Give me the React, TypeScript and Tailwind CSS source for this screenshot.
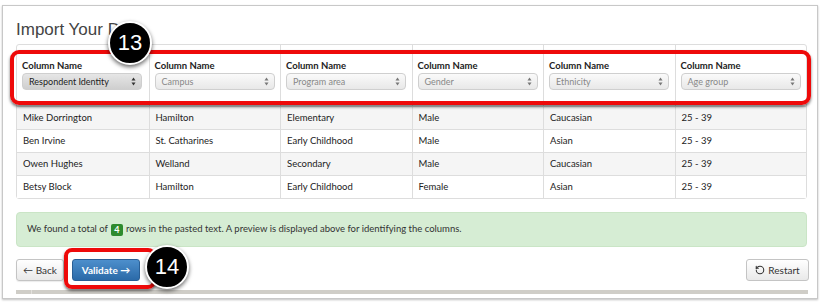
import { RotateCcw } from "lucide-react";

const columns = [
  { label: "Respondent Identity", active: true },
  { label: "Campus", active: false },
  { label: "Program area", active: false },
  { label: "Gender", active: false },
  { label: "Ethnicity", active: false },
  { label: "Age group", active: false },
];

const rows = [
  ["Mike Dorrington", "Hamilton", "Elementary", "Male", "Caucasian", "25 - 39"],
  ["Ben Irvine", "St. Catharines", "Early Childhood", "Male", "Asian", "25 - 39"],
  ["Owen Hughes", "Welland", "Secondary", "Male", "Caucasian", "25 - 39"],
  ["Betsy Block", "Hamilton", "Early Childhood", "Female", "Asian", "25 - 39"],
];

function Arrows({ dark }: { dark: boolean }) {
  return (
    <svg width="5" height="9" viewBox="0 0 5 9" className="shrink-0">
      <path d="M2.5 0.5 L4.5 3.5 L0.5 3.5 Z" fill={dark ? "#333" : "#777"} />
      <path d="M2.5 8.5 L4.5 5.5 L0.5 5.5 Z" fill={dark ? "#333" : "#777"} />
    </svg>
  );
}

function Callout({ n }: { n: string }) {
  return (
    <div className="w-[44px] h-[44px] rounded-full bg-black border-[2px] border-white shadow-[0_2px_4px_rgba(0,0,0,0.6)] flex items-center justify-center text-white text-[22px] font-['Liberation_Sans',sans-serif] leading-none">
      {n}
    </div>
  );
}

export default function App() {
  return (
    <div className="relative w-[822px] h-[302px] bg-white overflow-hidden font-['Lato',sans-serif]">
      <div className="ml-[2px] mt-[5px] w-[816px] h-[294px] border border-[#c8c8c8] shadow-[0_1px_2px_rgba(0,0,0,0.25)] pl-[13px] pr-[9px]">
        {/* Title */}
        <h1 className="mt-[13px] h-[22px] text-[17px] leading-[22px] font-light text-[#444] font-['Liberation_Sans',sans-serif]">
          Import Your Data
        </h1>

        {/* Table */}
        <div className="mt-[3px] w-[791px] border border-[#dddddd] rounded-[3px] text-[9.5px] text-[#222]">
          <div className="grid grid-cols-6 h-[61px]">
            {columns.map((col, i) => (
              <div
                key={col.label}
                className={`px-[5px] pt-[14px] ${i > 0 ? "border-l border-[#dddddd]" : ""}`}
              >
                <div className="font-bold text-[9.5px] leading-[13px] text-[#222]">Column Name</div>
                <div
                  className={`mt-[1px] h-[17px] w-[120px] rounded-[4px] border border-[#cfcfcf] flex items-center justify-between pl-[6px] pr-[5px] text-[9px] ${
                    col.active
                      ? "bg-gradient-to-b from-[#e6e6e6] to-[#cfcfcf] text-[#222]"
                      : "bg-gradient-to-b from-[#fafafa] to-[#e8e8e8] text-[#888]"
                  }`}
                >
                  <span>{col.label}</span>
                  <Arrows dark={col.active} />
                </div>
              </div>
            ))}
          </div>
          {rows.map((row, r) => (
            <div
              key={r}
              className={`grid grid-cols-6 h-[23px] border-t border-[#dddddd] ${r % 2 === 0 ? "bg-[#f5f5f5]" : "bg-white"}`}
            >
              {row.map((cell, c) => (
                <div
                  key={c}
                  className={`px-[6px] flex items-center ${c > 0 ? "border-l border-[#dddddd]" : ""}`}
                >
                  {cell}
                </div>
              ))}
            </div>
          ))}
        </div>

        {/* Alert */}
        <div className="mt-[13px] w-[791px] h-[35px] rounded-[4px] bg-[#d6edd4] border border-[#cae5c6] flex items-center pl-[10px] text-[9.5px] text-[#333]">
          We found a total of
          <span className="mx-[3px] inline-flex items-center justify-center w-[12px] h-[12px] rounded-[2px] bg-[#2e8b2e] text-white font-bold text-[9px]">
            4
          </span>
          rows in the pasted text. A preview is displayed above for identifying the columns.
        </div>

        {/* Buttons */}
        <div className="mt-[12px] flex items-center">
          <button className="h-[22px] w-[48px] rounded-[3px] border border-[#c4c4c4] bg-gradient-to-b from-white to-[#e9e9e9] text-[10px] text-[#333] shadow-[0_1px_1px_rgba(0,0,0,0.08)]">
            ← Back
          </button>
          <button className="ml-[8px] h-[22px] w-[68px] rounded-[3px] border border-[#2a5f95] bg-gradient-to-b from-[#4d8fcc] to-[#2b6aa8] text-[10px] font-bold text-white">
            Validate →
          </button>
          <button className="ml-auto mr-[-1px] h-[22px] w-[63px] rounded-[3px] border border-[#c4c4c4] bg-gradient-to-b from-white to-[#e9e9e9] text-[10px] text-[#333] flex items-center justify-center gap-[3px]">
            <RotateCcw size={10} strokeWidth={2.5} />
            Restart
          </button>
        </div>

        {/* Bottom bar */}
        <div className="mt-[9px] w-[792px] h-[4px] bg-[#cfcdc7] flex">
          <div className="w-[16px] h-full border-r border-[#e2e0dc]" />
        </div>
      </div>

      {/* Annotation 13 */}
      <div className="absolute left-[10px] top-[50px] w-[801px] h-[55px] rounded-[9px] border-[4px] border-[#ee0a0a] shadow-[0_2px_3px_rgba(0,0,0,0.55)]" />
      <div className="absolute left-[108px] top-[21px]">
        <Callout n="13" />
      </div>

      {/* Annotation 14 */}
      <div className="absolute left-[64px] top-[248px] w-[92px] h-[41px] rounded-[8px] border-[4px] border-[#ee0a0a] shadow-[0_2px_3px_rgba(0,0,0,0.55)]" />
      <div className="absolute left-[145px] top-[245px]">
        <Callout n="14" />
      </div>
    </div>
  );
}
